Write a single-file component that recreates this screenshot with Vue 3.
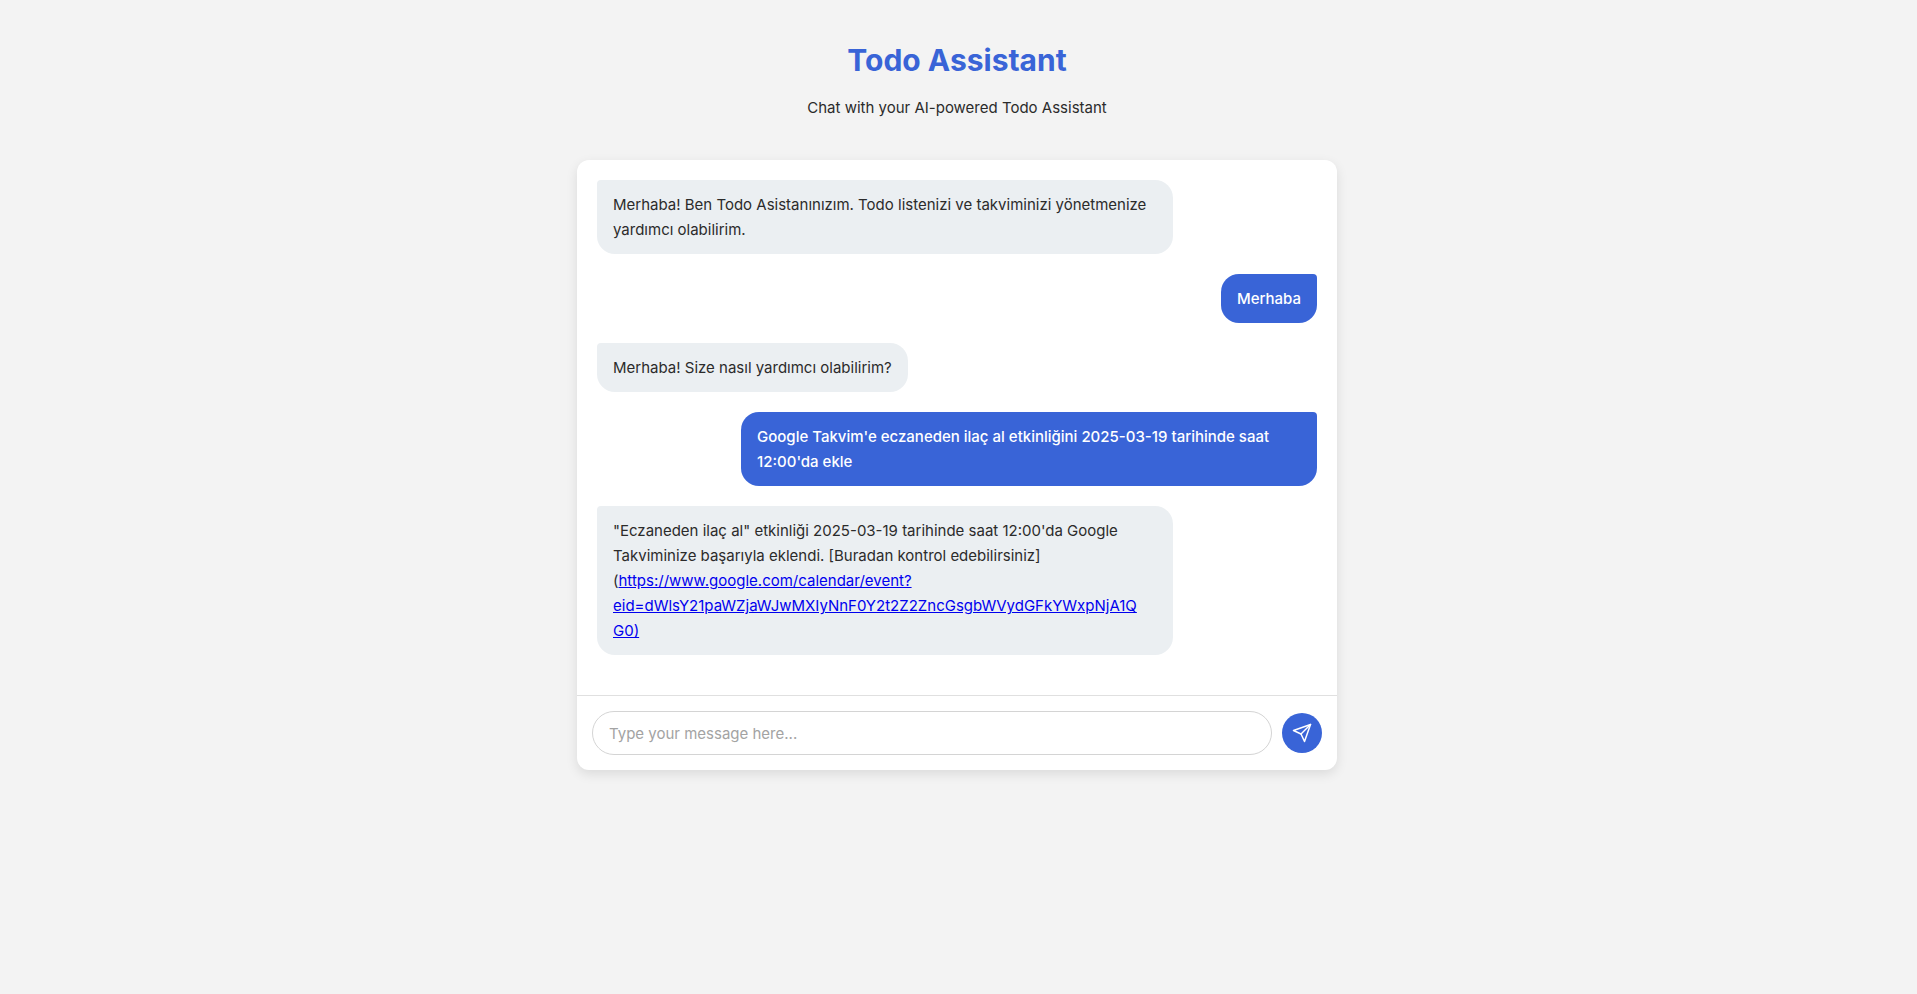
<script setup>
import { ref } from 'vue'

const draft = ref('')

const messages = ref([
  { from: 'assistant', text: 'Merhaba! Ben Todo Asistanınızım. Todo listenizi ve takviminizi yönetmenize yardımcı olabilirim.' },
  { from: 'user', text: 'Merhaba' },
  { from: 'assistant', text: 'Merhaba! Size nasıl yardımcı olabilirim?' },
  { from: 'user', text: "Google Takvim'e eczaneden ilaç al etkinliğini 2025-03-19 tarihinde saat 12:00'da ekle" },
  {
    from: 'assistant',
    text: '"Eczaneden ilaç al" etkinliği 2025-03-19 tarihinde saat 12:00\'da Google Takviminize başarıyla eklendi. [Buradan kontrol edebilirsiniz](',
    link: ['https://www.google.com/calendar/event?', 'eid=dWlsY21paWZjaWJwMXIyNnF0Y2t2Z2ZncGsgbWVydGFkYWxpNjA1Q', 'G0)']
  }
])

function send() {
  const text = draft.value.trim()
  if (!text) return
  messages.value.push({ from: 'user', text })
  draft.value = ''
}
</script>

<template>
  <div class="container">
    <header class="header">
      <h1>Todo Assistant</h1>
      <p>Chat with your AI-powered Todo Assistant</p>
    </header>
    <main class="chat">
      <div class="messages">
        <div v-for="(m, i) in messages" :key="i" class="message" :class="m.from">{{ m.text }}<a v-if="m.link" :href="m.link.join('')" target="_blank"><template v-for="part in m.link" :key="part">{{ part }}<wbr></template></a></div>
      </div>
      <form class="composer" @submit.prevent="send">
        <input v-model="draft" type="text" placeholder="Type your message here..." aria-label="Message">
        <button type="submit" aria-label="Send">
          <svg viewBox="0 0 20 20" width="20" height="20" fill="none" stroke="currentColor" stroke-width="1.5" stroke-linejoin="round" stroke-linecap="round">
            <path d="M18.5 1.5 1.5 7.5 9 11 12.5 18.5Z" />
            <path d="M18.5 1.5 9 11" />
          </svg>
        </button>
      </form>
    </main>
  </div>
</template>

<style>
body {
  margin: 0;
  padding-right: 3px;
  background: #f3f3f3;
}
</style>

<style scoped>
.container {
  box-sizing: border-box;
  max-width: 800px;
  margin: 0 auto;
  padding: 40px 20px;
  color: #2b2b2b;
  font-family: Inter, "Liberation Sans", sans-serif;
  font-size: 15px;
  line-height: 25px;
}

.header {
  margin-bottom: 40px;
  text-align: center;
}

h1 {
  margin: 0 0 15px;
  color: #3964d7;
  font-size: 30px;
  font-weight: 700;
  line-height: 40px;
}

p {
  margin: 0;
}

.chat {
  overflow: hidden;
  background: #fff;
  border-radius: 12px;
  box-shadow: 0 4px 12px rgba(0, 0, 0, 0.1);
}

.messages {
  display: flex;
  flex-direction: column;
  gap: 20px;
  padding: 20px 20px 40px;
}

.message {
  box-sizing: border-box;
  max-width: 80%;
  padding: 12px 16px;
  border-radius: 18px;
  overflow-wrap: break-word;
}

.assistant {
  align-self: flex-start;
  background: #ebeff2;
  border-top-left-radius: 4px;
}

.user {
  align-self: flex-end;
  background: #3964d7;
  color: #fff;
  font-weight: 500;
  border-top-right-radius: 4px;
}

.message a {
  color: #0000ee;
}

.composer {
  display: flex;
  align-items: center;
  gap: 10px;
  padding: 15px;
  border-top: 1px solid #e0e0e0;
}

input {
  box-sizing: border-box;
  flex: 1;
  min-width: 0;
  height: 44px;
  padding: 0 16px;
  border: 1px solid #d4d4d4;
  border-radius: 24px;
  background: #fff;
  color: inherit;
  font: inherit;
  outline: none;
}

input::placeholder {
  color: #a3a3a3;
}

button {
  display: flex;
  align-items: center;
  justify-content: center;
  width: 40px;
  height: 40px;
  padding: 0;
  border: none;
  border-radius: 50%;
  background: #3964d7;
  color: #fff;
  cursor: pointer;
}
</style>
